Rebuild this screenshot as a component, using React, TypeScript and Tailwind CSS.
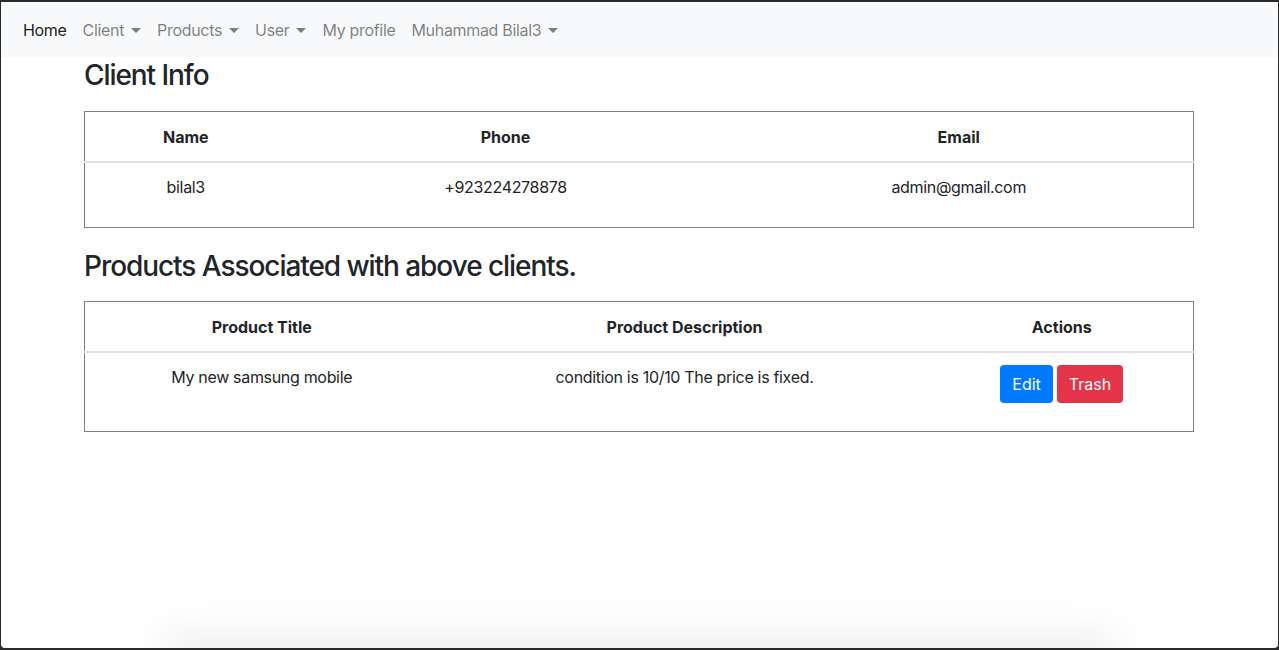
import React from "react";

const Caret = () => (
  <span className="inline-block ml-[7px] align-[3px] w-0 h-0 border-t-[5px] border-t-current border-l-[5px] border-l-transparent border-r-[5px] border-r-transparent" />
);

const NavLink = ({ label, active, caret }: { label: string; active?: boolean; caret?: boolean }) => (
  <span className={`px-2 tracking-[-0.02em] ${active ? "text-[rgba(0,0,0,0.9)]" : "text-[rgba(0,0,0,0.5)]"}`}>
    {label}
    {caret && <Caret />}
  </span>
);

export default function App() {
  return (
    <div
      className="w-[1279px] h-[650px] bg-[#2a2a2a] pt-[2px] pb-[2px] px-[1px] overflow-hidden text-[16px] text-[#212529]"
      style={{ fontFamily: "Inter, 'Noto Sans', 'Liberation Sans', sans-serif" }}
    >
      <div className="relative h-full bg-white rounded-b-[4px] overflow-hidden">
        <nav className="h-[55px] bg-[#f8f9fa] flex items-center px-[14px] leading-6">
          <NavLink label="Home" active />
          <NavLink label="Client" caret />
          <NavLink label="Products" caret />
          <NavLink label="User" caret />
          <NavLink label="My profile" />
          <NavLink label="Muhammad Bilal3" caret />
        </nav>

        <div className="ml-[83px] w-[1110px]">
          <h3 className="text-[28px] font-medium leading-[1.2] tracking-[-0.038em] mt-[2px] mb-2">Client Info</h3>
          <table className="mt-[18px] w-full border-collapse border border-[#808080] text-center">
            <thead>
              <tr>
                <th className="w-[202px] pt-[13px] pb-3 leading-6 font-bold border-b-2 border-[#dee2e6]">Name</th>
                <th className="w-[438px] pt-[13px] pb-3 leading-6 font-bold border-b-2 border-[#dee2e6]">Phone</th>
                <th className="pt-[13px] pb-3 leading-6 font-bold border-b-2 border-[#dee2e6]">Email</th>
              </tr>
            </thead>
            <tbody className="tracking-[-0.02em]">
              <tr>
                <td className="pt-3 pb-[28px] leading-6">bilal3</td>
                <td className="pt-3 pb-[28px] leading-6">+923224278878</td>
                <td className="pt-3 pb-[28px] leading-6">admin@gmail.com</td>
              </tr>
            </tbody>
          </table>

          <h3 className="text-[28px] font-medium leading-[1.2] tracking-[-0.038em] mt-[22px] mb-2">
            Products Associated with above clients.
          </h3>
          <table className="mt-[18px] w-full border-collapse border border-[#808080] text-center">
            <thead>
              <tr>
                <th className="w-[354px] pt-[13px] pb-3 leading-6 font-bold border-b-2 border-[#dee2e6]">Product Title</th>
                <th className="w-[492px] pt-[13px] pb-3 leading-6 font-bold border-b-2 border-[#dee2e6]">Product Description</th>
                <th className="pt-[13px] pb-3 leading-6 font-bold border-b-2 border-[#dee2e6]">Actions</th>
              </tr>
            </thead>
            <tbody>
              <tr>
                <td className="pt-3 pb-[28px] leading-6 align-top tracking-[-0.02em]">My new samsung mobile</td>
                <td className="pt-3 pb-[28px] leading-6 align-top tracking-[-0.02em]">condition is 10/10 The price is fixed.</td>
                <td className="pt-3 pb-[28px] leading-6 align-top">
                  <div className="flex justify-center gap-[4px]">
                    <button className="px-3 py-[7px] leading-6 bg-[#007bff] text-white rounded-[4px]">Edit</button>
                    <button className="px-3 py-[7px] leading-6 bg-[#e3344a] text-white rounded-[4px]">Trash</button>
                  </div>
                </td>
              </tr>
            </tbody>
          </table>
        </div>

        <div className="absolute left-[160px] right-[160px] bottom-[-22px] h-[40px] bg-[#000]/[0.06] blur-[18px] rounded-full" />
      </div>
    </div>
  );
}
